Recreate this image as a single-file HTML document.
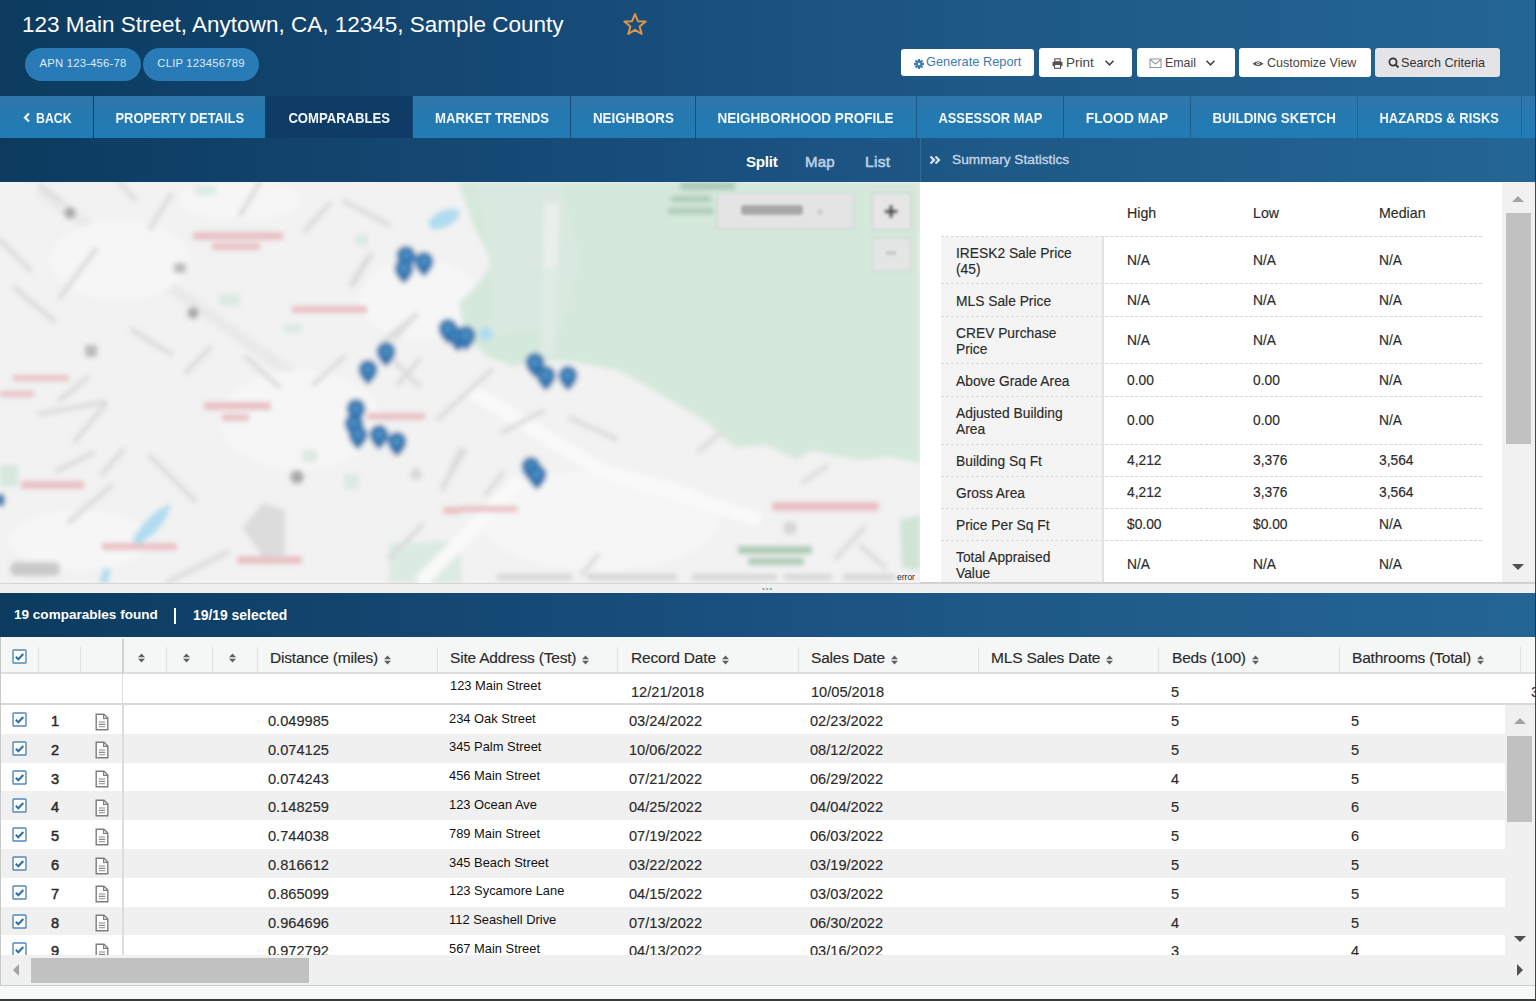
<!DOCTYPE html>
<html><head><meta charset="utf-8">
<style>
*{box-sizing:border-box;margin:0;padding:0}
html,body{width:1536px;height:1001px;overflow:hidden;background:#fff}
body{position:relative;font-family:"Liberation Sans",sans-serif;color:#333}
.abs{position:absolute}
.abs>svg{display:block}
#hdr{left:0;top:0;width:1536px;height:182px;background:linear-gradient(90deg,#0c3b5f 0%,#11436c 20%,#1b5282 52%,#1e5987 65%,#236594 100%)}
#title{left:22px;top:11px;font-size:22.5px;color:#fff;white-space:nowrap;line-height:28px}
.pill{top:48px;height:33px;border-radius:17px;background:#287bb6;color:#dcecf8;font-size:11.3px;line-height:31px;text-align:center;letter-spacing:0.2px}
.btn{top:48px;height:29px;border-radius:3px;background:#fff;font-size:12.8px;line-height:29px;white-space:nowrap;color:#444}
.tab{top:96px;height:42px;background:linear-gradient(180deg,#3076a9 0%,#2579b1 45%,#217cb3 100%);color:#f2f7fb;font-weight:bold;font-size:15px;line-height:43px;text-align:center;white-space:nowrap}
.tab span{display:inline-block}
.tab.act{background:#0e3c66}
.sub{top:138px;height:44px;font-size:15px;line-height:44px;color:#b9cde0;font-weight:bold}

.st-h{font-size:14.2px;color:#333;line-height:16px;margin-top:3px}
.st-row{left:21px;width:541px;border-top:1px dashed #d6d6d6}
.st-lab{position:absolute;left:0;top:0;width:163px;height:100%;background:#f4f4f4;border-right:2px solid #e2e2e2;display:flex;align-items:center;padding-left:15px;padding-top:3px;font-size:13.8px;line-height:16px;color:#333}
.st-v{position:absolute;top:0;height:100%;display:flex;align-items:center;font-size:13.8px;color:#333}

.cbar{top:593px;height:44px;line-height:44px;font-size:13.4px;color:#fff;letter-spacing:0px;font-weight:bold}
.gh{top:0;height:37px;line-height:41px;font-size:15.5px;letter-spacing:-0.2px;color:#333;white-space:nowrap}
.gh .srt{display:inline-block;vertical-align:-2px;margin-left:2px}
.ga{font-size:12.9px;color:#111;line-height:16px;white-space:nowrap}
.gd{font-size:14.6px;color:#333;line-height:17px;white-space:nowrap}

.st-h,.st-lab,.st-v,.gh,.gd{color:#2b2b2b;-webkit-text-stroke:0.15px #2b2b2b}
</style></head><body>
<div id="hdr" class="abs"></div>
<div id="title" class="abs">123 Main Street, Anytown, CA, 12345, Sample County</div>
<svg class="abs" style="left:622px;top:12px" width="26" height="25" viewBox="0 0 26 25"><path d="M13 2 L15.9 9.2 L23.6 9.6 L17.6 14.5 L19.7 22 L13 17.8 L6.3 22 L8.4 14.5 L2.4 9.6 L10.1 9.2 Z" fill="none" stroke="#e0954c" stroke-width="2" stroke-linejoin="round"/></svg>
<div class="abs pill" style="left:25px;width:116px">APN 123-456-78</div>
<div class="abs pill" style="left:143px;width:116px">CLIP 123456789</div>

<div class="abs btn" style="left:901px;width:133px;color:#3b7bb2;top:49px;height:27px;line-height:27px"><svg style="position:absolute;left:13px;top:10px" width="10" height="10" viewBox="0 0 10 10"><g fill="#3b7bb2" transform="translate(5 5)"><rect x="-1.1" y="-5" width="2.2" height="2.6" transform="rotate(0)"/><rect x="-1.1" y="-5" width="2.2" height="2.6" transform="rotate(45)"/><rect x="-1.1" y="-5" width="2.2" height="2.6" transform="rotate(90)"/><rect x="-1.1" y="-5" width="2.2" height="2.6" transform="rotate(135)"/><rect x="-1.1" y="-5" width="2.2" height="2.6" transform="rotate(180)"/><rect x="-1.1" y="-5" width="2.2" height="2.6" transform="rotate(225)"/><rect x="-1.1" y="-5" width="2.2" height="2.6" transform="rotate(270)"/><rect x="-1.1" y="-5" width="2.2" height="2.6" transform="rotate(315)"/><circle r="3.4"/><circle r="1.3" fill="#fff"/></g></svg><span style="position:absolute;left:25px;top:-1px">Generate Report</span></div>
<div class="abs btn" style="left:1039px;width:93px"></div>
<div class="abs btn" style="left:1137px;width:98px"></div>
<div class="abs btn" style="left:1239px;width:132px"></div>
<div class="abs btn" style="left:1375px;width:125px;background:#e4e4e6"></div>

<div class="abs tab" style="left:0;width:93px"><svg style="position:absolute;left:23px;top:112px;top:16px" width="8" height="11" viewBox="0 0 8 11"><path d="M6 1.5 L2 5.5 L6 9.5" fill="none" stroke="#f2f7fb" stroke-width="2.2"/></svg><span style="position:absolute;left:36px;transform:scaleX(0.82);transform-origin:0 0">BACK</span></div>
<div class="abs tab" style="left:94px;width:171px"><span style="transform:scaleX(0.86)">PROPERTY DETAILS</span></div>
<div class="abs tab act" style="left:266px;width:146px"><span style="transform:scaleX(0.873)">COMPARABLES</span></div>
<div class="abs tab" style="left:413px;width:157px"><span style="transform:scaleX(0.877)">MARKET TRENDS</span></div>
<div class="abs tab" style="left:571px;width:124px"><span style="transform:scaleX(0.892)">NEIGHBORS</span></div>
<div class="abs tab" style="left:696px;width:220px"><span style="transform:scaleX(0.903)">NEIGHBORHOOD PROFILE</span></div>
<div class="abs tab" style="left:917px;width:146px"><span style="transform:scaleX(0.861)">ASSESSOR MAP</span></div>
<div class="abs tab" style="left:1064px;width:126px"><span style="transform:scaleX(0.917)">FLOOD MAP</span></div>
<div class="abs tab" style="left:1191px;width:166px"><span style="transform:scaleX(0.893)">BUILDING SKETCH</span></div>
<div class="abs tab" style="left:1358px;width:163px"><span style="transform:scaleX(0.864)">HAZARDS &amp; RISKS</span></div>
<div class="abs tab" style="left:1522px;width:14px"></div>

<!-- button contents -->
<svg class="abs" style="left:1052px;top:58px" width="11" height="11" viewBox="0 0 11 11"><rect x="2.8" y="0.8" width="5.4" height="3" fill="none" stroke="#555" stroke-width="1.1"/><rect x="0.5" y="3.8" width="10" height="4.4" rx="1" fill="#555"/><rect x="2.5" y="6.5" width="6" height="3.8" fill="#fff" stroke="#555" stroke-width="1.1"/></svg>
<div class="abs" style="left:1066px;top:48px;font-size:13.5px;line-height:29px;color:#444">Print</div>
<svg class="abs" style="left:1104px;top:59px" width="11" height="8" viewBox="0 0 11 8"><path d="M1.5 1.8 L5.5 5.8 L9.5 1.8" fill="none" stroke="#444" stroke-width="1.6"/></svg>
<svg class="abs" style="left:1149px;top:57px" width="13" height="12" viewBox="0 0 13 12"><rect x="1" y="2" width="11" height="8.5" fill="none" stroke="#999" stroke-width="1.1"/><path d="M1 2.5 L6.5 7 L12 2.5" fill="none" stroke="#999" stroke-width="1.1"/></svg>
<div class="abs" style="left:1165px;top:49px;font-size:12.4px;line-height:29px;color:#444">Email</div>
<svg class="abs" style="left:1205px;top:59px" width="11" height="8" viewBox="0 0 11 8"><path d="M1.5 1.8 L5.5 5.8 L9.5 1.8" fill="none" stroke="#444" stroke-width="1.6"/></svg>
<svg class="abs" style="left:1252px;top:59px" width="12" height="9" viewBox="0 0 12 9"><path d="M0.5 4.8 Q6 -0.5 11.5 4.8 Q6 9.5 0.5 4.8 Z" fill="#555"/><circle cx="6" cy="4.6" r="1.7" fill="#fff"/><circle cx="6" cy="4.6" r="0.8" fill="#555"/></svg>
<div class="abs" style="left:1267px;top:49px;font-size:12.5px;line-height:29px;color:#444">Customize View</div>
<svg class="abs" style="left:1388px;top:57px" width="12" height="12" viewBox="0 0 12 12"><circle cx="5" cy="5" r="3.6" fill="none" stroke="#333" stroke-width="1.7"/><path d="M7.6 7.6 L10.5 10.5" stroke="#333" stroke-width="1.8"/></svg>
<div class="abs" style="left:1401px;top:49px;font-size:12.6px;line-height:29px;color:#333">Search Criteria</div>

<!-- sub bar -->
<div class="abs" style="left:920px;top:138px;width:1px;height:44px;background:#2f6a98"></div>
<div class="abs sub" style="left:746px;top:140px;color:#fff;font-size:15.2px;letter-spacing:-0.3px">Split</div>
<div class="abs sub" style="left:805px;top:140px;font-size:15px;font-weight:normal;-webkit-text-stroke:0.6px #bccfe2;letter-spacing:0.2px">Map</div>
<div class="abs sub" style="left:865px;top:140px;font-size:15.5px;font-weight:normal;-webkit-text-stroke:0.6px #bccfe2;letter-spacing:0.3px">List</div>
<svg class="abs" style="left:929px;top:155px" width="12" height="10" viewBox="0 0 12 10"><path d="M1.5 1.5 L5 5 L1.5 8.5 M6.5 1.5 L10 5 L6.5 8.5" fill="none" stroke="#dde8f2" stroke-width="2.2"/></svg>
<div class="abs sub" style="left:952px;top:138px;font-size:13.7px;font-weight:normal;color:#c8d8e8;-webkit-text-stroke:0.3px #c8d8e8">Summary Statistics</div>

<!-- map -->
<div class="abs" style="left:0;top:182px;width:920px;height:401px;overflow:hidden;background:#f1f1f1">
<svg width="920" height="401" viewBox="0 182 920 401" style="position:absolute;left:0;top:0">
<defs><filter id="bl" x="-5%" y="-5%" width="110%" height="110%"><feGaussianBlur stdDeviation="2.6"/></filter>
<filter id="bl2"><feGaussianBlur stdDeviation="1.6"/></filter>
<symbol id="pin" viewBox="0 0 18 24" overflow="visible"><path d="M9 23 C5 19 0.5 15 0.5 9 A8.5 8.5 0 1 1 17.5 9 C17.5 15 13 19 9 23 Z" fill="#3177b0"/><circle cx="9" cy="9" r="4" fill="#4d8fc2"/></symbol></defs>
<g filter="url(#bl)">
<rect x="0" y="182" width="920" height="401" fill="#f2f2f2"/>
<path d="M40 190 L150 272 L300 380" stroke="#e9e9e9" stroke-width="12" fill="none"/>
<g fill="#f6f6f6"><ellipse cx="120" cy="260" rx="70" ry="40"/><ellipse cx="300" cy="420" rx="80" ry="50"/><ellipse cx="600" cy="520" rx="120" ry="50"/><ellipse cx="420" cy="300" rx="60" ry="40"/><ellipse cx="80" cy="540" rx="70" ry="30"/><ellipse cx="240" cy="200" rx="60" ry="20"/></g>
<path d="M458 182 L473 224 L492 263 L479 283 L459 303 L464 334 L486 356 L514 367 L530 360 L574 362 L620 371 L653 390 L705 421 L735 448 L766 445 L797 460 L812 451 L858 460 L888 457 L920 463 L920 182 Z" fill="#d5e8dc"/>
<path d="M478 182 L560 182 L580 260 L560 330 L490 335 L492 280 Z" fill="#d9e9df"/>
<path d="M900 520 L920 515 L920 570 L902 568 Z" fill="#cfe3d6"/>
<path d="M389 543 L460 540 L462 583 L389 583 Z" fill="#dcebe2"/>
<path d="M0 465 L18 465 L18 486 L0 486 Z" fill="#d6e8dd"/>
<g fill="#dceae2"><rect x="195" y="186" width="21" height="9"/><rect x="219" y="294" width="21" height="12"/><rect x="284" y="324" width="18" height="9"/><rect x="356" y="234" width="12" height="12"/><rect x="344" y="474" width="15" height="15"/><rect x="302" y="450" width="15" height="12"/></g>
<path d="M552 200 L550 268" stroke="#ebefec" stroke-width="14"/><path d="M550 268 L548 356" stroke="#dfebe4" stroke-width="14"/>
<g stroke="#f9f9f9" stroke-width="14" fill="none"><path d="M470 390 L600 470 L760 520"/><path d="M420 583 L520 480"/></g>
<g fill="none"><path d="M171 195 L150 228" stroke="#dcdcdc" stroke-width="5" stroke-linecap="round"/><path d="M96 249 L60 297" stroke="#dcdcdc" stroke-width="5" stroke-linecap="round"/><path d="M15 288 L54 321" stroke="#dcdcdc" stroke-width="5" stroke-linecap="round"/><path d="M329 204 L305 231" stroke="#dcdcdc" stroke-width="5" stroke-linecap="round"/><path d="M344 201 L389 225" stroke="#dcdcdc" stroke-width="5" stroke-linecap="round"/><path d="M371 255 L353 285" stroke="#dcdcdc" stroke-width="5" stroke-linecap="round"/><path d="M132 330 L171 354" stroke="#dcdcdc" stroke-width="5" stroke-linecap="round"/><path d="M210 348 L186 372" stroke="#dcdcdc" stroke-width="5" stroke-linecap="round"/><path d="M246 357 L279 387" stroke="#dcdcdc" stroke-width="5" stroke-linecap="round"/><path d="M344 357 L314 384" stroke="#dcdcdc" stroke-width="5" stroke-linecap="round"/><path d="M416 315 L386 339" stroke="#dcdcdc" stroke-width="5" stroke-linecap="round"/><path d="M419 360 L398 384" stroke="#dcdcdc" stroke-width="5" stroke-linecap="round"/><path d="M87 378 L60 400" stroke="#dcdcdc" stroke-width="5" stroke-linecap="round"/><path d="M39 414 L105 402" stroke="#dcdcdc" stroke-width="5" stroke-linecap="round"/><path d="M105 405 L75 441" stroke="#dcdcdc" stroke-width="5" stroke-linecap="round"/><path d="M93 453 L57 471" stroke="#dcdcdc" stroke-width="5" stroke-linecap="round"/><path d="M123 450 L102 474" stroke="#dcdcdc" stroke-width="5" stroke-linecap="round"/><path d="M150 456 L195 501" stroke="#dcdcdc" stroke-width="5" stroke-linecap="round"/><path d="M111 486 L69 522" stroke="#dcdcdc" stroke-width="5" stroke-linecap="round"/><path d="M422 525 L389 558" stroke="#dcdcdc" stroke-width="5" stroke-linecap="round"/><path d="M460 450 L443 489" stroke="#dcdcdc" stroke-width="5" stroke-linecap="round"/><path d="M228 552 L168 582" stroke="#dcdcdc" stroke-width="5" stroke-linecap="round"/><path d="M351 284 L368 257" stroke="#dcdcdc" stroke-width="5" stroke-linecap="round"/><path d="M414 316 L395 338" stroke="#dcdcdc" stroke-width="5" stroke-linecap="round"/><path d="M395 362 L419 386" stroke="#dcdcdc" stroke-width="5" stroke-linecap="round"/><path d="M492 370 L438 419" stroke="#dcdcdc" stroke-width="5" stroke-linecap="round"/><path d="M503 432 L543 411" stroke="#dcdcdc" stroke-width="5" stroke-linecap="round"/><path d="M570 418 L616 439" stroke="#dcdcdc" stroke-width="5" stroke-linecap="round"/><path d="M465 451 L443 486" stroke="#dcdcdc" stroke-width="5" stroke-linecap="round"/><path d="M503 473 L486 494" stroke="#dcdcdc" stroke-width="5" stroke-linecap="round"/><path d="M827 466 L803 482" stroke="#dcdcdc" stroke-width="5" stroke-linecap="round"/><path d="M864 528 L836 558" stroke="#dcdcdc" stroke-width="5" stroke-linecap="round"/><path d="M861 546 L885 567" stroke="#dcdcdc" stroke-width="5" stroke-linecap="round"/><path d="M598 555 L582 574" stroke="#dcdcdc" stroke-width="5" stroke-linecap="round"/><path d="M720 433 L699 451" stroke="#dcdcdc" stroke-width="5" stroke-linecap="round"/><path d="M40 186 L60 200" stroke="#dcdcdc" stroke-width="5" stroke-linecap="round"/><path d="M0 240 L30 270" stroke="#dcdcdc" stroke-width="5" stroke-linecap="round"/><path d="M260 182 L240 215" stroke="#dcdcdc" stroke-width="5" stroke-linecap="round"/><path d="M120 182 L135 200" stroke="#dcdcdc" stroke-width="5" stroke-linecap="round"/></g>
<g fill="#e9bec3"><rect x="193" y="232" width="90" height="8"/><rect x="212" y="243" width="48" height="7"/><rect x="292" y="306" width="75" height="7"/><rect x="13" y="375" width="56" height="6"/><rect x="0" y="391" width="34" height="6"/><rect x="204" y="402" width="67" height="8"/><rect x="222" y="414" width="27" height="7"/><rect x="367" y="413" width="58" height="7"/><rect x="21" y="481" width="63" height="8"/><rect x="443" y="507" width="17" height="7"/><rect x="102" y="543" width="75" height="7"/><rect x="237" y="556" width="65" height="8"/><rect x="460" y="506" width="58" height="6"/><rect x="772" y="502" width="107" height="9"/></g>
<g fill="#b0dcf0"><path d="M428 222 Q440 205 460 210 Q458 228 432 230 Z"/><circle cx="486" cy="334" r="7"/><path d="M132 540 Q150 510 171 504 Q165 530 138 545 Z"/><path d="M99 583 L104 567 L111 570 L108 583 Z"/></g>
<g fill="#a9a9a9"><circle cx="70" cy="213" r="6"/><rect x="174" y="263" width="12" height="10" fill="#bcbcbc"/><circle cx="193" cy="313" r="6"/><rect x="85" y="345" width="12" height="12" fill="#b9b9b9"/><circle cx="297" cy="477" r="7"/><circle cx="416" cy="474" r="6" fill="#d8d8d8"/><circle cx="790" cy="528" r="7" fill="#d6d6d6"/><circle cx="552" cy="198" r="6" fill="#dfe6e2"/></g>
<path d="M263 503 L285 510 L285 558 L262 556 L242 528 Z" fill="#dcdcdc"/>
<g fill="#a9c9b3"><rect x="738" y="546" width="74" height="8"/><rect x="748" y="558" width="56" height="7"/><rect x="680" y="182" width="55" height="8"/><rect x="671" y="196" width="40" height="6"/><rect x="668" y="208" width="46" height="6"/></g>
<use href="#pin" x="396" y="245" width="20" height="27"/><use href="#pin" x="394" y="258" width="20" height="27"/><use href="#pin" x="414" y="251" width="20" height="27"/><use href="#pin" x="438" y="318" width="20" height="27"/><use href="#pin" x="448" y="326" width="20" height="27"/><use href="#pin" x="456" y="325" width="20" height="27"/><use href="#pin" x="376" y="341" width="20" height="27"/><use href="#pin" x="358" y="359" width="20" height="27"/><use href="#pin" x="346" y="398" width="20" height="27"/><use href="#pin" x="344" y="413" width="20" height="27"/><use href="#pin" x="348" y="424" width="20" height="27"/><use href="#pin" x="369" y="424" width="20" height="27"/><use href="#pin" x="387" y="431" width="20" height="27"/><use href="#pin" x="525" y="352" width="20" height="27"/><use href="#pin" x="536" y="365" width="20" height="27"/><use href="#pin" x="558" y="365" width="20" height="27"/><use href="#pin" x="521" y="456" width="20" height="27"/><use href="#pin" x="527" y="464" width="20" height="27"/><ellipse cx="1" cy="500" rx="4" ry="7" fill="#2f74ae"/>
<rect x="10" y="562" width="50" height="14" rx="6" fill="#c9c9c9"/>
<g fill="#d4d4d4"><rect x="497" y="574" width="75" height="6"/><rect x="587" y="574" width="90" height="6"/><rect x="692" y="574" width="85" height="6"/><rect x="784" y="574" width="48" height="6"/><rect x="843" y="574" width="52" height="6"/></g>
</g>
<g filter="url(#bl2)">
<rect x="716" y="193" width="139" height="37" rx="3" fill="#cfdcd4"/>
<rect x="718" y="194" width="135" height="34" rx="2" fill="#e4e4e4"/>
<rect x="741" y="205" width="62" height="10" rx="3" fill="#a8a8a8"/><circle cx="820" cy="212" r="2.5" fill="#c4c4c4"/>
<rect x="871" y="192" width="41" height="39" rx="3" fill="#cddbd2"/>
<rect x="873" y="194" width="37" height="35" rx="2" fill="#e6e6e6"/>
<path d="M891 205 L891 218 M884.5 211.5 L897.5 211.5" stroke="#505050" stroke-width="3.5"/>
<rect x="871" y="237" width="41" height="35" rx="3" fill="#d2ded6"/>
<rect x="873" y="239" width="37" height="31" rx="2" fill="#e3e6e4"/>
<path d="M886 253 L896 253" stroke="#bdbdbd" stroke-width="3"/>
</g>
<text x="897" y="580" font-family="Liberation Sans" font-size="8.5" fill="#2a2a2a">error</text>
</svg>
</div>
<!-- stats panel -->
<div class="abs" style="left:920px;top:182px;width:616px;height:401px;background:#fff;overflow:hidden">
<div class="abs st-h" style="left:207px;top:20px">High</div>
<div class="abs st-h" style="left:333px;top:20px">Low</div>
<div class="abs st-h" style="left:459px;top:20px">Median</div>
<div class="abs st-row" style="top:54px;height:47px"><div class="st-lab"><span>IRESK2 Sale Price<br>(45)</span></div><div class="st-v" style="left:186px">N/A</div><div class="st-v" style="left:312px">N/A</div><div class="st-v" style="left:438px">N/A</div></div>
<div class="abs st-row" style="top:101px;height:33px"><div class="st-lab"><span>MLS Sale Price</span></div><div class="st-v" style="left:186px">N/A</div><div class="st-v" style="left:312px">N/A</div><div class="st-v" style="left:438px">N/A</div></div>
<div class="abs st-row" style="top:134px;height:47px"><div class="st-lab"><span>CREV Purchase<br>Price</span></div><div class="st-v" style="left:186px">N/A</div><div class="st-v" style="left:312px">N/A</div><div class="st-v" style="left:438px">N/A</div></div>
<div class="abs st-row" style="top:181px;height:33px"><div class="st-lab"><span>Above Grade Area</span></div><div class="st-v" style="left:186px">0.00</div><div class="st-v" style="left:312px">0.00</div><div class="st-v" style="left:438px">N/A</div></div>
<div class="abs st-row" style="top:214px;height:48px"><div class="st-lab"><span>Adjusted Building<br>Area</span></div><div class="st-v" style="left:186px">0.00</div><div class="st-v" style="left:312px">0.00</div><div class="st-v" style="left:438px">N/A</div></div>
<div class="abs st-row" style="top:262px;height:32px"><div class="st-lab"><span>Building Sq Ft</span></div><div class="st-v" style="left:186px">4,212</div><div class="st-v" style="left:312px">3,376</div><div class="st-v" style="left:438px">3,564</div></div>
<div class="abs st-row" style="top:294px;height:32px"><div class="st-lab"><span>Gross Area</span></div><div class="st-v" style="left:186px">4,212</div><div class="st-v" style="left:312px">3,376</div><div class="st-v" style="left:438px">3,564</div></div>
<div class="abs st-row" style="top:326px;height:32px"><div class="st-lab"><span>Price Per Sq Ft</span></div><div class="st-v" style="left:186px">$0.00</div><div class="st-v" style="left:312px">$0.00</div><div class="st-v" style="left:438px">N/A</div></div>
<div class="abs st-row" style="top:358px;height:48px"><div class="st-lab"><span>Total Appraised<br>Value</span></div><div class="st-v" style="left:186px">N/A</div><div class="st-v" style="left:312px">N/A</div><div class="st-v" style="left:438px">N/A</div></div>
<div class="abs" style="left:0;top:400px;width:616px;height:1px;background:#cfcfcf"></div>
<div class="abs" style="left:582px;top:0;width:34px;height:400px;background:#f1f1f1"></div>
<div class="abs" style="left:586px;top:31px;width:25px;height:231px;background:#c1c1c1"></div>
<svg class="abs" style="left:590px;top:12px" width="16" height="10"><path d="M2 8 L8 2 L14 8 Z" fill="#a3a3a3"/></svg>
<svg class="abs" style="left:590px;top:380px" width="16" height="10"><path d="M2 2 L8 8 L14 2 Z" fill="#505050"/></svg>
</div>

<!-- splitter -->
<div class="abs" style="left:0;top:583px;width:1536px;height:10px;background:#f0f0f0;border-top:1px solid #d4d4d4"></div>
<div class="abs" style="left:762px;top:586px;font-size:8px;color:#8aa;letter-spacing:1px;line-height:6px">&bull;&bull;&bull;</div>
<!-- comparables bar -->
<div class="abs" style="left:0;top:593px;width:1536px;height:44px;background:linear-gradient(90deg,#0c3b5f 0%,#11436c 20%,#1b5282 52%,#1e5987 65%,#236594 100%)"></div>
<div class="abs cbar" style="left:14px;font-size:13.55px">19 comparables found</div>
<div class="abs" style="left:174px;top:608px;width:2.2px;height:16px;background:#fff"></div>
<div class="abs cbar" style="left:193px;font-size:13.9px">19/19 selected</div>
<!-- grid -->
<div class="abs" style="left:0;top:637px;width:1536px;height:348px;background:#fff;overflow:hidden">
<div class="abs" style="left:0;top:0;width:1536px;height:37px;background:#f5f6f6;border-bottom:2px solid #dedede"></div>
<div class="abs" style="left:38px;top:10px;width:1px;height:27px;background:#e0e0e0"></div>
<div class="abs" style="left:80px;top:10px;width:1px;height:27px;background:#e0e0e0"></div>
<div class="abs" style="left:122px;top:2px;width:2px;height:35px;background:#d2d2d2"></div>
<div class="abs" style="left:166px;top:10px;width:1px;height:27px;background:#e0e0e0"></div>
<div class="abs" style="left:212px;top:10px;width:1px;height:27px;background:#e0e0e0"></div>
<div class="abs" style="left:257px;top:10px;width:1px;height:27px;background:#e0e0e0"></div>
<div class="abs" style="left:437px;top:10px;width:1px;height:27px;background:#e0e0e0"></div>
<div class="abs" style="left:617px;top:10px;width:1px;height:27px;background:#e0e0e0"></div>
<div class="abs" style="left:798px;top:10px;width:1px;height:27px;background:#e0e0e0"></div>
<div class="abs" style="left:978px;top:10px;width:1px;height:27px;background:#e0e0e0"></div>
<div class="abs" style="left:1158px;top:10px;width:1px;height:27px;background:#e0e0e0"></div>
<div class="abs" style="left:1339px;top:10px;width:1px;height:27px;background:#e0e0e0"></div>
<div class="abs" style="left:1520px;top:10px;width:1px;height:27px;background:#e0e0e0"></div>
<div class="abs" style="left:12px;top:12px"><svg class="cb" width="15" height="15" viewBox="0 0 15 15"><rect x="1" y="1" width="13" height="13" rx="0.8" fill="#fff" stroke="#5288b8" stroke-width="1.4"/><path d="M3.8 7.8 L6.3 10.2 L11.3 5" fill="none" stroke="#2d70a8" stroke-width="2.1"/></svg></div>
<div class="abs" style="left:138px;top:16px"><svg class="srt" width="7" height="10" viewBox="0 0 7 10"><path d="M3.5 0.5 L7 4.2 L0 4.2 Z M3.5 9.5 L7 5.8 L0 5.8 Z" fill="#606060"/></svg></div>
<div class="abs" style="left:183px;top:16px"><svg class="srt" width="7" height="10" viewBox="0 0 7 10"><path d="M3.5 0.5 L7 4.2 L0 4.2 Z M3.5 9.5 L7 5.8 L0 5.8 Z" fill="#606060"/></svg></div>
<div class="abs" style="left:229px;top:16px"><svg class="srt" width="7" height="10" viewBox="0 0 7 10"><path d="M3.5 0.5 L7 4.2 L0 4.2 Z M3.5 9.5 L7 5.8 L0 5.8 Z" fill="#606060"/></svg></div>
<div class="abs gh" style="left:270px">Distance (miles) <svg class="srt" width="7" height="10" viewBox="0 0 7 10"><path d="M3.5 0.5 L7 4.2 L0 4.2 Z M3.5 9.5 L7 5.8 L0 5.8 Z" fill="#606060"/></svg></div>
<div class="abs gh" style="left:450px">Site Address (Test) <svg class="srt" width="7" height="10" viewBox="0 0 7 10"><path d="M3.5 0.5 L7 4.2 L0 4.2 Z M3.5 9.5 L7 5.8 L0 5.8 Z" fill="#606060"/></svg></div>
<div class="abs gh" style="left:631px">Record Date <svg class="srt" width="7" height="10" viewBox="0 0 7 10"><path d="M3.5 0.5 L7 4.2 L0 4.2 Z M3.5 9.5 L7 5.8 L0 5.8 Z" fill="#606060"/></svg></div>
<div class="abs gh" style="left:811px">Sales Date <svg class="srt" width="7" height="10" viewBox="0 0 7 10"><path d="M3.5 0.5 L7 4.2 L0 4.2 Z M3.5 9.5 L7 5.8 L0 5.8 Z" fill="#606060"/></svg></div>
<div class="abs gh" style="left:991px">MLS Sales Date <svg class="srt" width="7" height="10" viewBox="0 0 7 10"><path d="M3.5 0.5 L7 4.2 L0 4.2 Z M3.5 9.5 L7 5.8 L0 5.8 Z" fill="#606060"/></svg></div>
<div class="abs gh" style="left:1172px">Beds (100) <svg class="srt" width="7" height="10" viewBox="0 0 7 10"><path d="M3.5 0.5 L7 4.2 L0 4.2 Z M3.5 9.5 L7 5.8 L0 5.8 Z" fill="#606060"/></svg></div>
<div class="abs gh" style="left:1352px">Bathrooms (Total) <svg class="srt" width="7" height="10" viewBox="0 0 7 10"><path d="M3.5 0.5 L7 4.2 L0 4.2 Z M3.5 9.5 L7 5.8 L0 5.8 Z" fill="#606060"/></svg></div>
<div class="abs" style="left:0;top:37px;width:1536px;height:31px;background:#fff;border-bottom:2px solid #d9d9d9"></div>
<div class="abs" style="left:122px;top:37px;width:1px;height:31px;background:#e0e0e0"></div>
<div class="abs ga" style="left:450px;top:41px">123 Main Street</div>
<div class="abs gd" style="left:631px;top:47.0px">12/21/2018</div>
<div class="abs gd" style="left:811px;top:47.0px">10/05/2018</div>
<div class="abs gd" style="left:1171px;top:47.0px">5</div>
<div class="abs gd" style="left:1531px;top:47.0px">3</div>
<div class="abs" style="left:0;top:68.0px;width:1505px;height:28.8px;background:#fff"></div>
<div class="abs" style="left:122px;top:68.0px;width:1.5px;height:28.8px;background:#dcdcdc"></div>
<div class="abs" style="left:12px;top:75.0px"><svg class="cb" width="15" height="15" viewBox="0 0 15 15"><rect x="1" y="1" width="13" height="13" rx="0.8" fill="#fff" stroke="#5288b8" stroke-width="1.4"/><path d="M3.8 7.8 L6.3 10.2 L11.3 5" fill="none" stroke="#2d70a8" stroke-width="2.1"/></svg></div>
<div class="abs gd" style="-webkit-text-stroke:0.5px #2b2b2b;left:51px;top:76.0px">1</div>
<div class="abs" style="left:95px;top:75.5px"><svg class="doc" width="14" height="18" viewBox="0 0 14 18"><path d="M1.2 1.2 L9 1.2 L12.8 5 L12.8 16.8 L1.2 16.8 Z" fill="#fff" stroke="#7d7d7d" stroke-width="1.4"/><path d="M8.6 1.2 L8.6 5.4 L12.8 5.4" fill="none" stroke="#7d7d7d" stroke-width="1.2"/><path d="M3.8 9 L10.2 9 M3.8 11.4 L10.2 11.4 M3.8 13.8 L10.2 13.8" stroke="#8a8a8a" stroke-width="1.1"/></svg></div>
<div class="abs gd" style="left:268px;top:76.0px">0.049985</div>
<div class="abs ga" style="left:449px;top:73.5px">234 Oak Street</div>
<div class="abs gd" style="left:629px;top:76.0px">03/24/2022</div>
<div class="abs gd" style="left:810px;top:76.0px">02/23/2022</div>
<div class="abs gd" style="left:1171px;top:76.0px">5</div>
<div class="abs gd" style="left:1351px;top:76.0px">5</div>
<div class="abs" style="left:0;top:96.8px;width:1505px;height:28.8px;background:#f0f0f0"></div>
<div class="abs" style="left:122px;top:96.8px;width:1.5px;height:28.8px;background:#dcdcdc"></div>
<div class="abs" style="left:12px;top:103.8px"><svg class="cb" width="15" height="15" viewBox="0 0 15 15"><rect x="1" y="1" width="13" height="13" rx="0.8" fill="#fff" stroke="#5288b8" stroke-width="1.4"/><path d="M3.8 7.8 L6.3 10.2 L11.3 5" fill="none" stroke="#2d70a8" stroke-width="2.1"/></svg></div>
<div class="abs gd" style="-webkit-text-stroke:0.5px #2b2b2b;left:51px;top:104.8px">2</div>
<div class="abs" style="left:95px;top:104.3px"><svg class="doc" width="14" height="18" viewBox="0 0 14 18"><path d="M1.2 1.2 L9 1.2 L12.8 5 L12.8 16.8 L1.2 16.8 Z" fill="#fff" stroke="#7d7d7d" stroke-width="1.4"/><path d="M8.6 1.2 L8.6 5.4 L12.8 5.4" fill="none" stroke="#7d7d7d" stroke-width="1.2"/><path d="M3.8 9 L10.2 9 M3.8 11.4 L10.2 11.4 M3.8 13.8 L10.2 13.8" stroke="#8a8a8a" stroke-width="1.1"/></svg></div>
<div class="abs gd" style="left:268px;top:104.8px">0.074125</div>
<div class="abs ga" style="left:449px;top:102.3px">345 Palm Street</div>
<div class="abs gd" style="left:629px;top:104.8px">10/06/2022</div>
<div class="abs gd" style="left:810px;top:104.8px">08/12/2022</div>
<div class="abs gd" style="left:1171px;top:104.8px">5</div>
<div class="abs gd" style="left:1351px;top:104.8px">5</div>
<div class="abs" style="left:0;top:125.6px;width:1505px;height:28.8px;background:#fff"></div>
<div class="abs" style="left:122px;top:125.6px;width:1.5px;height:28.8px;background:#dcdcdc"></div>
<div class="abs" style="left:12px;top:132.6px"><svg class="cb" width="15" height="15" viewBox="0 0 15 15"><rect x="1" y="1" width="13" height="13" rx="0.8" fill="#fff" stroke="#5288b8" stroke-width="1.4"/><path d="M3.8 7.8 L6.3 10.2 L11.3 5" fill="none" stroke="#2d70a8" stroke-width="2.1"/></svg></div>
<div class="abs gd" style="-webkit-text-stroke:0.5px #2b2b2b;left:51px;top:133.6px">3</div>
<div class="abs" style="left:95px;top:133.1px"><svg class="doc" width="14" height="18" viewBox="0 0 14 18"><path d="M1.2 1.2 L9 1.2 L12.8 5 L12.8 16.8 L1.2 16.8 Z" fill="#fff" stroke="#7d7d7d" stroke-width="1.4"/><path d="M8.6 1.2 L8.6 5.4 L12.8 5.4" fill="none" stroke="#7d7d7d" stroke-width="1.2"/><path d="M3.8 9 L10.2 9 M3.8 11.4 L10.2 11.4 M3.8 13.8 L10.2 13.8" stroke="#8a8a8a" stroke-width="1.1"/></svg></div>
<div class="abs gd" style="left:268px;top:133.6px">0.074243</div>
<div class="abs ga" style="left:449px;top:131.1px">456 Main Street</div>
<div class="abs gd" style="left:629px;top:133.6px">07/21/2022</div>
<div class="abs gd" style="left:810px;top:133.6px">06/29/2022</div>
<div class="abs gd" style="left:1171px;top:133.6px">4</div>
<div class="abs gd" style="left:1351px;top:133.6px">5</div>
<div class="abs" style="left:0;top:154.4px;width:1505px;height:28.8px;background:#f0f0f0"></div>
<div class="abs" style="left:122px;top:154.4px;width:1.5px;height:28.8px;background:#dcdcdc"></div>
<div class="abs" style="left:12px;top:161.4px"><svg class="cb" width="15" height="15" viewBox="0 0 15 15"><rect x="1" y="1" width="13" height="13" rx="0.8" fill="#fff" stroke="#5288b8" stroke-width="1.4"/><path d="M3.8 7.8 L6.3 10.2 L11.3 5" fill="none" stroke="#2d70a8" stroke-width="2.1"/></svg></div>
<div class="abs gd" style="-webkit-text-stroke:0.5px #2b2b2b;left:51px;top:162.4px">4</div>
<div class="abs" style="left:95px;top:161.9px"><svg class="doc" width="14" height="18" viewBox="0 0 14 18"><path d="M1.2 1.2 L9 1.2 L12.8 5 L12.8 16.8 L1.2 16.8 Z" fill="#fff" stroke="#7d7d7d" stroke-width="1.4"/><path d="M8.6 1.2 L8.6 5.4 L12.8 5.4" fill="none" stroke="#7d7d7d" stroke-width="1.2"/><path d="M3.8 9 L10.2 9 M3.8 11.4 L10.2 11.4 M3.8 13.8 L10.2 13.8" stroke="#8a8a8a" stroke-width="1.1"/></svg></div>
<div class="abs gd" style="left:268px;top:162.4px">0.148259</div>
<div class="abs ga" style="left:449px;top:159.9px">123 Ocean Ave</div>
<div class="abs gd" style="left:629px;top:162.4px">04/25/2022</div>
<div class="abs gd" style="left:810px;top:162.4px">04/04/2022</div>
<div class="abs gd" style="left:1171px;top:162.4px">5</div>
<div class="abs gd" style="left:1351px;top:162.4px">6</div>
<div class="abs" style="left:0;top:183.2px;width:1505px;height:28.8px;background:#fff"></div>
<div class="abs" style="left:122px;top:183.2px;width:1.5px;height:28.8px;background:#dcdcdc"></div>
<div class="abs" style="left:12px;top:190.2px"><svg class="cb" width="15" height="15" viewBox="0 0 15 15"><rect x="1" y="1" width="13" height="13" rx="0.8" fill="#fff" stroke="#5288b8" stroke-width="1.4"/><path d="M3.8 7.8 L6.3 10.2 L11.3 5" fill="none" stroke="#2d70a8" stroke-width="2.1"/></svg></div>
<div class="abs gd" style="-webkit-text-stroke:0.5px #2b2b2b;left:51px;top:191.2px">5</div>
<div class="abs" style="left:95px;top:190.7px"><svg class="doc" width="14" height="18" viewBox="0 0 14 18"><path d="M1.2 1.2 L9 1.2 L12.8 5 L12.8 16.8 L1.2 16.8 Z" fill="#fff" stroke="#7d7d7d" stroke-width="1.4"/><path d="M8.6 1.2 L8.6 5.4 L12.8 5.4" fill="none" stroke="#7d7d7d" stroke-width="1.2"/><path d="M3.8 9 L10.2 9 M3.8 11.4 L10.2 11.4 M3.8 13.8 L10.2 13.8" stroke="#8a8a8a" stroke-width="1.1"/></svg></div>
<div class="abs gd" style="left:268px;top:191.2px">0.744038</div>
<div class="abs ga" style="left:449px;top:188.7px">789 Main Street</div>
<div class="abs gd" style="left:629px;top:191.2px">07/19/2022</div>
<div class="abs gd" style="left:810px;top:191.2px">06/03/2022</div>
<div class="abs gd" style="left:1171px;top:191.2px">5</div>
<div class="abs gd" style="left:1351px;top:191.2px">6</div>
<div class="abs" style="left:0;top:212.0px;width:1505px;height:28.8px;background:#f0f0f0"></div>
<div class="abs" style="left:122px;top:212.0px;width:1.5px;height:28.8px;background:#dcdcdc"></div>
<div class="abs" style="left:12px;top:219.0px"><svg class="cb" width="15" height="15" viewBox="0 0 15 15"><rect x="1" y="1" width="13" height="13" rx="0.8" fill="#fff" stroke="#5288b8" stroke-width="1.4"/><path d="M3.8 7.8 L6.3 10.2 L11.3 5" fill="none" stroke="#2d70a8" stroke-width="2.1"/></svg></div>
<div class="abs gd" style="-webkit-text-stroke:0.5px #2b2b2b;left:51px;top:220.0px">6</div>
<div class="abs" style="left:95px;top:219.5px"><svg class="doc" width="14" height="18" viewBox="0 0 14 18"><path d="M1.2 1.2 L9 1.2 L12.8 5 L12.8 16.8 L1.2 16.8 Z" fill="#fff" stroke="#7d7d7d" stroke-width="1.4"/><path d="M8.6 1.2 L8.6 5.4 L12.8 5.4" fill="none" stroke="#7d7d7d" stroke-width="1.2"/><path d="M3.8 9 L10.2 9 M3.8 11.4 L10.2 11.4 M3.8 13.8 L10.2 13.8" stroke="#8a8a8a" stroke-width="1.1"/></svg></div>
<div class="abs gd" style="left:268px;top:220.0px">0.816612</div>
<div class="abs ga" style="left:449px;top:217.5px">345 Beach Street</div>
<div class="abs gd" style="left:629px;top:220.0px">03/22/2022</div>
<div class="abs gd" style="left:810px;top:220.0px">03/19/2022</div>
<div class="abs gd" style="left:1171px;top:220.0px">5</div>
<div class="abs gd" style="left:1351px;top:220.0px">5</div>
<div class="abs" style="left:0;top:240.8px;width:1505px;height:28.8px;background:#fff"></div>
<div class="abs" style="left:122px;top:240.8px;width:1.5px;height:28.8px;background:#dcdcdc"></div>
<div class="abs" style="left:12px;top:247.8px"><svg class="cb" width="15" height="15" viewBox="0 0 15 15"><rect x="1" y="1" width="13" height="13" rx="0.8" fill="#fff" stroke="#5288b8" stroke-width="1.4"/><path d="M3.8 7.8 L6.3 10.2 L11.3 5" fill="none" stroke="#2d70a8" stroke-width="2.1"/></svg></div>
<div class="abs gd" style="-webkit-text-stroke:0.5px #2b2b2b;left:51px;top:248.8px">7</div>
<div class="abs" style="left:95px;top:248.3px"><svg class="doc" width="14" height="18" viewBox="0 0 14 18"><path d="M1.2 1.2 L9 1.2 L12.8 5 L12.8 16.8 L1.2 16.8 Z" fill="#fff" stroke="#7d7d7d" stroke-width="1.4"/><path d="M8.6 1.2 L8.6 5.4 L12.8 5.4" fill="none" stroke="#7d7d7d" stroke-width="1.2"/><path d="M3.8 9 L10.2 9 M3.8 11.4 L10.2 11.4 M3.8 13.8 L10.2 13.8" stroke="#8a8a8a" stroke-width="1.1"/></svg></div>
<div class="abs gd" style="left:268px;top:248.8px">0.865099</div>
<div class="abs ga" style="left:449px;top:246.3px">123 Sycamore Lane</div>
<div class="abs gd" style="left:629px;top:248.8px">04/15/2022</div>
<div class="abs gd" style="left:810px;top:248.8px">03/03/2022</div>
<div class="abs gd" style="left:1171px;top:248.8px">5</div>
<div class="abs gd" style="left:1351px;top:248.8px">5</div>
<div class="abs" style="left:0;top:269.6px;width:1505px;height:28.8px;background:#f0f0f0"></div>
<div class="abs" style="left:122px;top:269.6px;width:1.5px;height:28.8px;background:#dcdcdc"></div>
<div class="abs" style="left:12px;top:276.6px"><svg class="cb" width="15" height="15" viewBox="0 0 15 15"><rect x="1" y="1" width="13" height="13" rx="0.8" fill="#fff" stroke="#5288b8" stroke-width="1.4"/><path d="M3.8 7.8 L6.3 10.2 L11.3 5" fill="none" stroke="#2d70a8" stroke-width="2.1"/></svg></div>
<div class="abs gd" style="-webkit-text-stroke:0.5px #2b2b2b;left:51px;top:277.6px">8</div>
<div class="abs" style="left:95px;top:277.1px"><svg class="doc" width="14" height="18" viewBox="0 0 14 18"><path d="M1.2 1.2 L9 1.2 L12.8 5 L12.8 16.8 L1.2 16.8 Z" fill="#fff" stroke="#7d7d7d" stroke-width="1.4"/><path d="M8.6 1.2 L8.6 5.4 L12.8 5.4" fill="none" stroke="#7d7d7d" stroke-width="1.2"/><path d="M3.8 9 L10.2 9 M3.8 11.4 L10.2 11.4 M3.8 13.8 L10.2 13.8" stroke="#8a8a8a" stroke-width="1.1"/></svg></div>
<div class="abs gd" style="left:268px;top:277.6px">0.964696</div>
<div class="abs ga" style="left:449px;top:275.1px">112 Seashell Drive</div>
<div class="abs gd" style="left:629px;top:277.6px">07/13/2022</div>
<div class="abs gd" style="left:810px;top:277.6px">06/30/2022</div>
<div class="abs gd" style="left:1171px;top:277.6px">4</div>
<div class="abs gd" style="left:1351px;top:277.6px">5</div>
<div class="abs" style="left:0;top:298.4px;width:1505px;height:28.8px;background:#fff"></div>
<div class="abs" style="left:122px;top:298.4px;width:1.5px;height:28.8px;background:#dcdcdc"></div>
<div class="abs" style="left:12px;top:305.4px"><svg class="cb" width="15" height="15" viewBox="0 0 15 15"><rect x="1" y="1" width="13" height="13" rx="0.8" fill="#fff" stroke="#5288b8" stroke-width="1.4"/><path d="M3.8 7.8 L6.3 10.2 L11.3 5" fill="none" stroke="#2d70a8" stroke-width="2.1"/></svg></div>
<div class="abs gd" style="-webkit-text-stroke:0.5px #2b2b2b;left:51px;top:306.4px">9</div>
<div class="abs" style="left:95px;top:305.9px"><svg class="doc" width="14" height="18" viewBox="0 0 14 18"><path d="M1.2 1.2 L9 1.2 L12.8 5 L12.8 16.8 L1.2 16.8 Z" fill="#fff" stroke="#7d7d7d" stroke-width="1.4"/><path d="M8.6 1.2 L8.6 5.4 L12.8 5.4" fill="none" stroke="#7d7d7d" stroke-width="1.2"/><path d="M3.8 9 L10.2 9 M3.8 11.4 L10.2 11.4 M3.8 13.8 L10.2 13.8" stroke="#8a8a8a" stroke-width="1.1"/></svg></div>
<div class="abs gd" style="left:268px;top:306.4px">0.972792</div>
<div class="abs ga" style="left:449px;top:303.9px">567 Main Street</div>
<div class="abs gd" style="left:629px;top:306.4px">04/13/2022</div>
<div class="abs gd" style="left:810px;top:306.4px">03/16/2022</div>
<div class="abs gd" style="left:1171px;top:306.4px">3</div>
<div class="abs gd" style="left:1351px;top:306.4px">4</div>
<div class="abs" style="left:0;top:0;width:1px;height:348px;background:#c8c8c8"></div>
<!-- v scrollbar -->
<div class="abs" style="left:1505px;top:68px;width:31px;height:250px;background:#f0f0f0"></div>
<div class="abs" style="left:1507px;top:98.5px;width:25px;height:86.5px;background:#c1c1c1"></div>
<svg class="abs" style="left:1512px;top:79px" width="16" height="10"><path d="M2 8 L8 2 L14 8 Z" fill="#a3a3a3"/></svg>
<svg class="abs" style="left:1512px;top:297px" width="16" height="10"><path d="M2 2 L8 8 L14 2 Z" fill="#505050"/></svg>
<!-- h scrollbar -->
<div class="abs" style="left:0;top:318px;width:1536px;height:30px;background:#f0f0f0"></div>
<div class="abs" style="left:31px;top:321px;width:278px;height:25px;background:#c1c1c1"></div>
<svg class="abs" style="left:11px;top:326px" width="10" height="14"><path d="M8 1 L2 7 L8 13 Z" fill="#a3a3a3"/></svg>
<svg class="abs" style="left:1515px;top:326px" width="10" height="14"><path d="M2 1 L8 7 L2 13 Z" fill="#505050"/></svg>
<div class="abs" style="left:0;top:318px;width:1px;height:30px;background:#c8c8c8"></div>
</div>
<!-- footer -->
<div class="abs" style="left:0;top:985px;width:1536px;height:14px;background:#f7f8f8;border-top:1.5px solid #cdcdcd"></div>
<div class="abs" style="left:0;top:999px;width:1536px;height:2px;background:#3a3a3a"></div>

<div class="abs" style="left:1534.5px;top:0;width:1.5px;height:1001px;background:#1b2a3a;opacity:0.85"></div>
</body></html>
